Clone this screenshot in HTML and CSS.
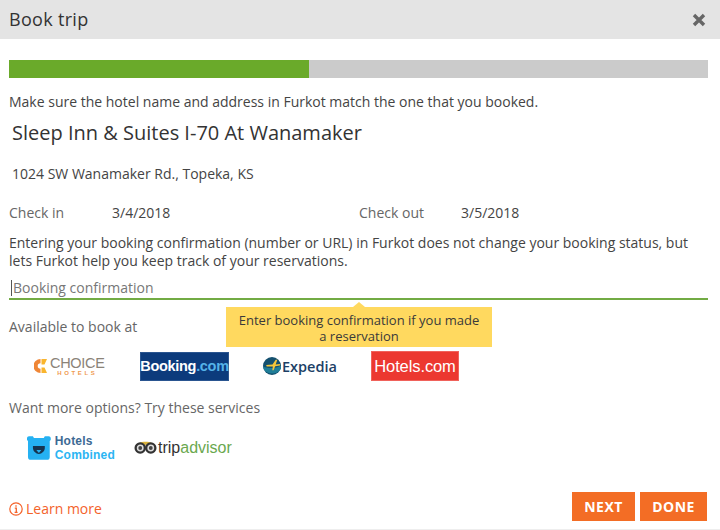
FILE: index.html
```html
<!DOCTYPE html>
<html lang="en">
<head>
  <meta charset="UTF-8">
  <meta name="viewport" content="width=device-width, initial-scale=1.0">
  <title>Book trip</title>
  <link rel="stylesheet" href="styles.css">
</head>
<body>
  <div class="dialog">
    <div class="header">
      <h1>Book trip</h1>
      <svg class="close" width="14" height="14" viewBox="0 0 14 14"><path d="M2 2l10 10M12 2L2 12" stroke="#666" stroke-width="3.4" fill="none"/></svg>
    </div>

    <div class="content">
      <div class="progress"><div class="progress-done"></div></div>
      <p class="note">Make sure the hotel name and address in Furkot match the one that you booked.</p>
      <div class="hotel-name">Sleep Inn &amp; Suites I-70 At Wanamaker</div>
      <div class="hotel-address">1024 SW Wanamaker Rd., Topeka, KS</div>

      <div class="dates">
        <span class="date-label">Check in</span><span class="date-value">3/4/2018</span>
        <span class="date-label">Check out</span><span class="date-value">3/5/2018</span>
      </div>

      <p class="explain">Entering your booking confirmation (number or URL) in Furkot does not change your booking status, but lets Furkot help you keep track of your reservations.</p>

      <div class="field">
        <span class="caret"></span><span class="placeholder">Booking confirmation</span>
        <div class="tooltip">Enter booking confirmation if you made a reservation</div>
      </div>

      <p class="section">Available to book at</p>
      <div class="logos">
        <div class="logo logo-choice">
          <svg width="13" height="14" viewBox="0 0 13 14"><path d="M6.500 0A7 7 0 0 0 6.500 14V9.800A2.800 2.800 0 0 1 6.500 4.200Z" fill="#ef8636"/><path d="M7.500 0H13L10.500 5.500H7.500ZM7.500 8.500H10.500L13 14H7.500Z" fill="#f9b52e"/></svg>
          <div class="choice-text"><span class="choice-name">CHOICE</span><span class="choice-sub">HOTELS</span></div>
        </div>
        <div class="logo logo-booking">Booking<span>.com</span></div>
        <div class="logo logo-expedia">
          <svg width="18" height="18" viewBox="0 0 17 17"><circle cx="8.500" cy="8.500" r="8.500" fill="#14506f"/><path d="M0 9C5 11 12 11 17 8V11C14 17 4 17 1 12Z" fill="#1f7e98"/><path d="M3 7.500L9 7L12 2.500H13.500L12 7L16 6.500V8L11.500 8.700L10 12.500H8.800L9.300 9L3.500 9Z" fill="#f4c63a"/></svg>
          <span>Expedia</span>
        </div>
        <div class="logo logo-hotels">Hotels.com</div>
      </div>

      <p class="section">Want more options? Try these services</p>
      <div class="logos logos-more">
        <div class="logo logo-combined">
          <svg width="24" height="24" viewBox="0 0 24 24"><path d="M2 0H6L7 2H17L18 0H22C23 0 24 1 24 2V4L23 5V21C23 23 22 24 20 24H4C2 24 1 23 1 21V5L0 4V2C0 1 1 0 2 0Z" fill="#25b1f2"/><path d="M6 10H18V12C18 15 15 18 12 18C9 18 6 15 6 12Z" fill="#16344f"/><path d="M9.500 14H14.500L12 17Z" fill="#25b1f2"/></svg>
          <div class="combined-text"><span class="combined-top">Hotels</span><span class="combined-bottom">Combined</span></div>
        </div>
        <div class="logo logo-trip">
          <svg width="23" height="13" viewBox="0 0 24 13"><path d="M5 2C9 0 15 0 19 2L12 4Z" fill="#d9b23c"/><circle cx="6.500" cy="7" r="4.800" fill="#ddd" stroke="#333" stroke-width="2.400"/><circle cx="17.500" cy="7" r="4.800" fill="#ddd" stroke="#333" stroke-width="2.400"/><circle cx="6.500" cy="7" r="2" fill="#444"/><circle cx="17.500" cy="7" r="2" fill="#444"/></svg>
          <span class="trip-dark">trip</span><span class="trip-green">advisor</span>
        </div>
      </div>
    </div>

    <div class="footer">
      <a class="learn" href="#">
        <svg width="14" height="14" viewBox="0 0 14 14"><circle cx="7" cy="7" r="6.200" fill="none" stroke="#f4622a" stroke-width="1.200"/><path d="M7 3.200V4.800M5.800 6.200H7.300V10.400M5.600 10.400H8.600" fill="none" stroke="#f4622a" stroke-width="1.300"/></svg>
        Learn more
      </a>
      <div class="actions">
        <button class="btn btn-next">NEXT</button>
        <button class="btn btn-done">DONE</button>
      </div>
    </div>
  </div>
</body>
</html>
```

FILE: styles.css
```css
* {
  box-sizing: border-box;
}
html, body {
  margin: 0;
  height: 100%;
}
body {
  background: #fff;
  color: #444;
  font-family: "Open Sans", "Liberation Sans", sans-serif;
  font-size: 14px;
  overflow: hidden;
}
p {
  margin: 0;
}
.dialog {
  display: flex;
  flex-direction: column;
  height: 530px;
  border-bottom: 1px solid #eee;
}
.header {
  display: flex;
  align-items: center;
  justify-content: space-between;
  height: 39px;
  padding: 0 14px 0 9px;
  background: #e4e4e4;
}
.header h1 {
  margin: 0 0 2px;
  color: #333;
  font-size: 18px;
  font-weight: 400;
  letter-spacing: 0.3px;
}
.content {
  flex: 1;
  padding: 21px 12px 0 9px;
}
.progress {
  height: 18px;
  background: #cbcbcb;
}
.progress-done {
  width: 300px;
  height: 100%;
  background: #6aaa2a;
}
.note {
  margin-top: 15px;
  line-height: 18px;
}
.hotel-name {
  margin-top: 8px;
  padding-left: 3px;
  color: #333;
  font-size: 20px;
  line-height: 28px;
}
.hotel-address {
  margin-top: 17px;
  padding-left: 3px;
  line-height: 20px;
}
.dates {
  display: grid;
  grid-template-columns: 103px 247px 102px 1fr;
  margin-top: 19px;
  line-height: 20px;
}
.date-label {
  color: #666;
}
.explain {
  margin-top: 11px;
  line-height: 18px;
}
.field {
  position: relative;
  display: flex;
  align-items: center;
  height: 23px;
  margin-top: 7px;
  border-bottom: 2px solid #72ab44;
  color: #777;
}
.caret {
  width: 1px;
  height: 16px;
  margin: 0 1px 0 2px;
  background: #555;
}
.tooltip {
  position: absolute;
  top: 30px;
  left: 217px;
  width: 266px;
  padding: 5px 10px 3px;
  background: #ffd95f;
  color: #3a3a3a;
  font-size: 13px;
  line-height: 16px;
  text-align: center;
}
.tooltip::before {
  content: "";
  position: absolute;
  top: -5px;
  left: 127px;
  border-left: 6px solid transparent;
  border-right: 6px solid transparent;
  border-bottom: 5px solid #ffd95f;
}
.section {
  margin-top: 17px;
  color: #666;
  line-height: 20px;
}
.logos {
  display: flex;
  align-items: center;
  height: 30px;
  margin-top: 14px;
}
.logos + .section {
  margin-top: 17px;
}
.logo {
  display: flex;
  align-items: center;
  flex: none;
}
.logo-choice {
  width: 71px;
  height: 20px;
  margin-left: 25px;
  gap: 3px;
}
.choice-text {
  display: flex;
  flex-direction: column;
  align-items: center;
  font-family: "Liberation Sans", sans-serif;
  line-height: 1;
}
.choice-name {
  color: #8b8378;
  font-size: 14.5px;
  letter-spacing: -0.3px;
}
.choice-sub {
  color: #ef9a4f;
  font-size: 6px;
  font-weight: 700;
  letter-spacing: 2.6px;
}
.logo-booking {
  justify-content: center;
  width: 89px;
  height: 29px;
  margin-left: 35px;
  border: 1px solid #2a5590;
  background: #0c3b7c;
  color: #fff;
  font-family: "Liberation Sans", sans-serif;
  font-size: 14.5px;
  font-weight: 700;
  letter-spacing: -0.3px;
}
.logo-booking span {
  color: #55b3e8;
}
.logo-expedia {
  width: 75px;
  margin-left: 34px;
  gap: 1px;
  color: #1d3f66;
  font-family: "Open Sans", sans-serif;
  font-size: 14.5px;
  font-weight: 600;
}
.logo-hotels {
  justify-content: center;
  width: 88px;
  height: 30px;
  margin-left: 33px;
  border: 1px solid #f0625b;
  background: #ec3830;
  color: #fff;
  font-family: "Liberation Sans", sans-serif;
  font-size: 16.5px;
  letter-spacing: -0.1px;
}
.logos-more {
  height: 25px;
  margin-top: 17px;
}
.logo-combined {
  width: 88px;
  margin-left: 18px;
  gap: 4px;
}
.combined-text {
  display: flex;
  flex-direction: column;
  font-family: "Liberation Sans", sans-serif;
  font-size: 12px;
  font-weight: 700;
  line-height: 14px;
  letter-spacing: 0.2px;
}
.combined-top {
  color: #3d6a94;
}
.combined-bottom {
  color: #2cb5f3;
}
.logo-trip {
  margin-left: 19px;
  font-family: "Liberation Sans", sans-serif;
  font-size: 16px;
}
.logo-trip svg {
  margin-right: 1px;
}
.trip-dark {
  color: #333;
}
.trip-green {
  color: #6aa84f;
}
.footer {
  display: flex;
  align-items: center;
  justify-content: space-between;
  padding: 0 13px 8px 9px;
}
.learn {
  display: flex;
  align-items: center;
  gap: 3px;
  margin-top: 4px;
  color: #f4622a;
  text-decoration: none;
}
.actions {
  display: flex;
  gap: 5px;
}
.btn {
  height: 29px;
  border: 0;
  background: #f36d25;
  color: #fff;
  font-family: inherit;
  font-size: 14px;
  font-weight: 700;
  letter-spacing: 0.5px;
}
.btn-next {
  width: 63px;
}
.btn-done {
  width: 67px;
}
```
